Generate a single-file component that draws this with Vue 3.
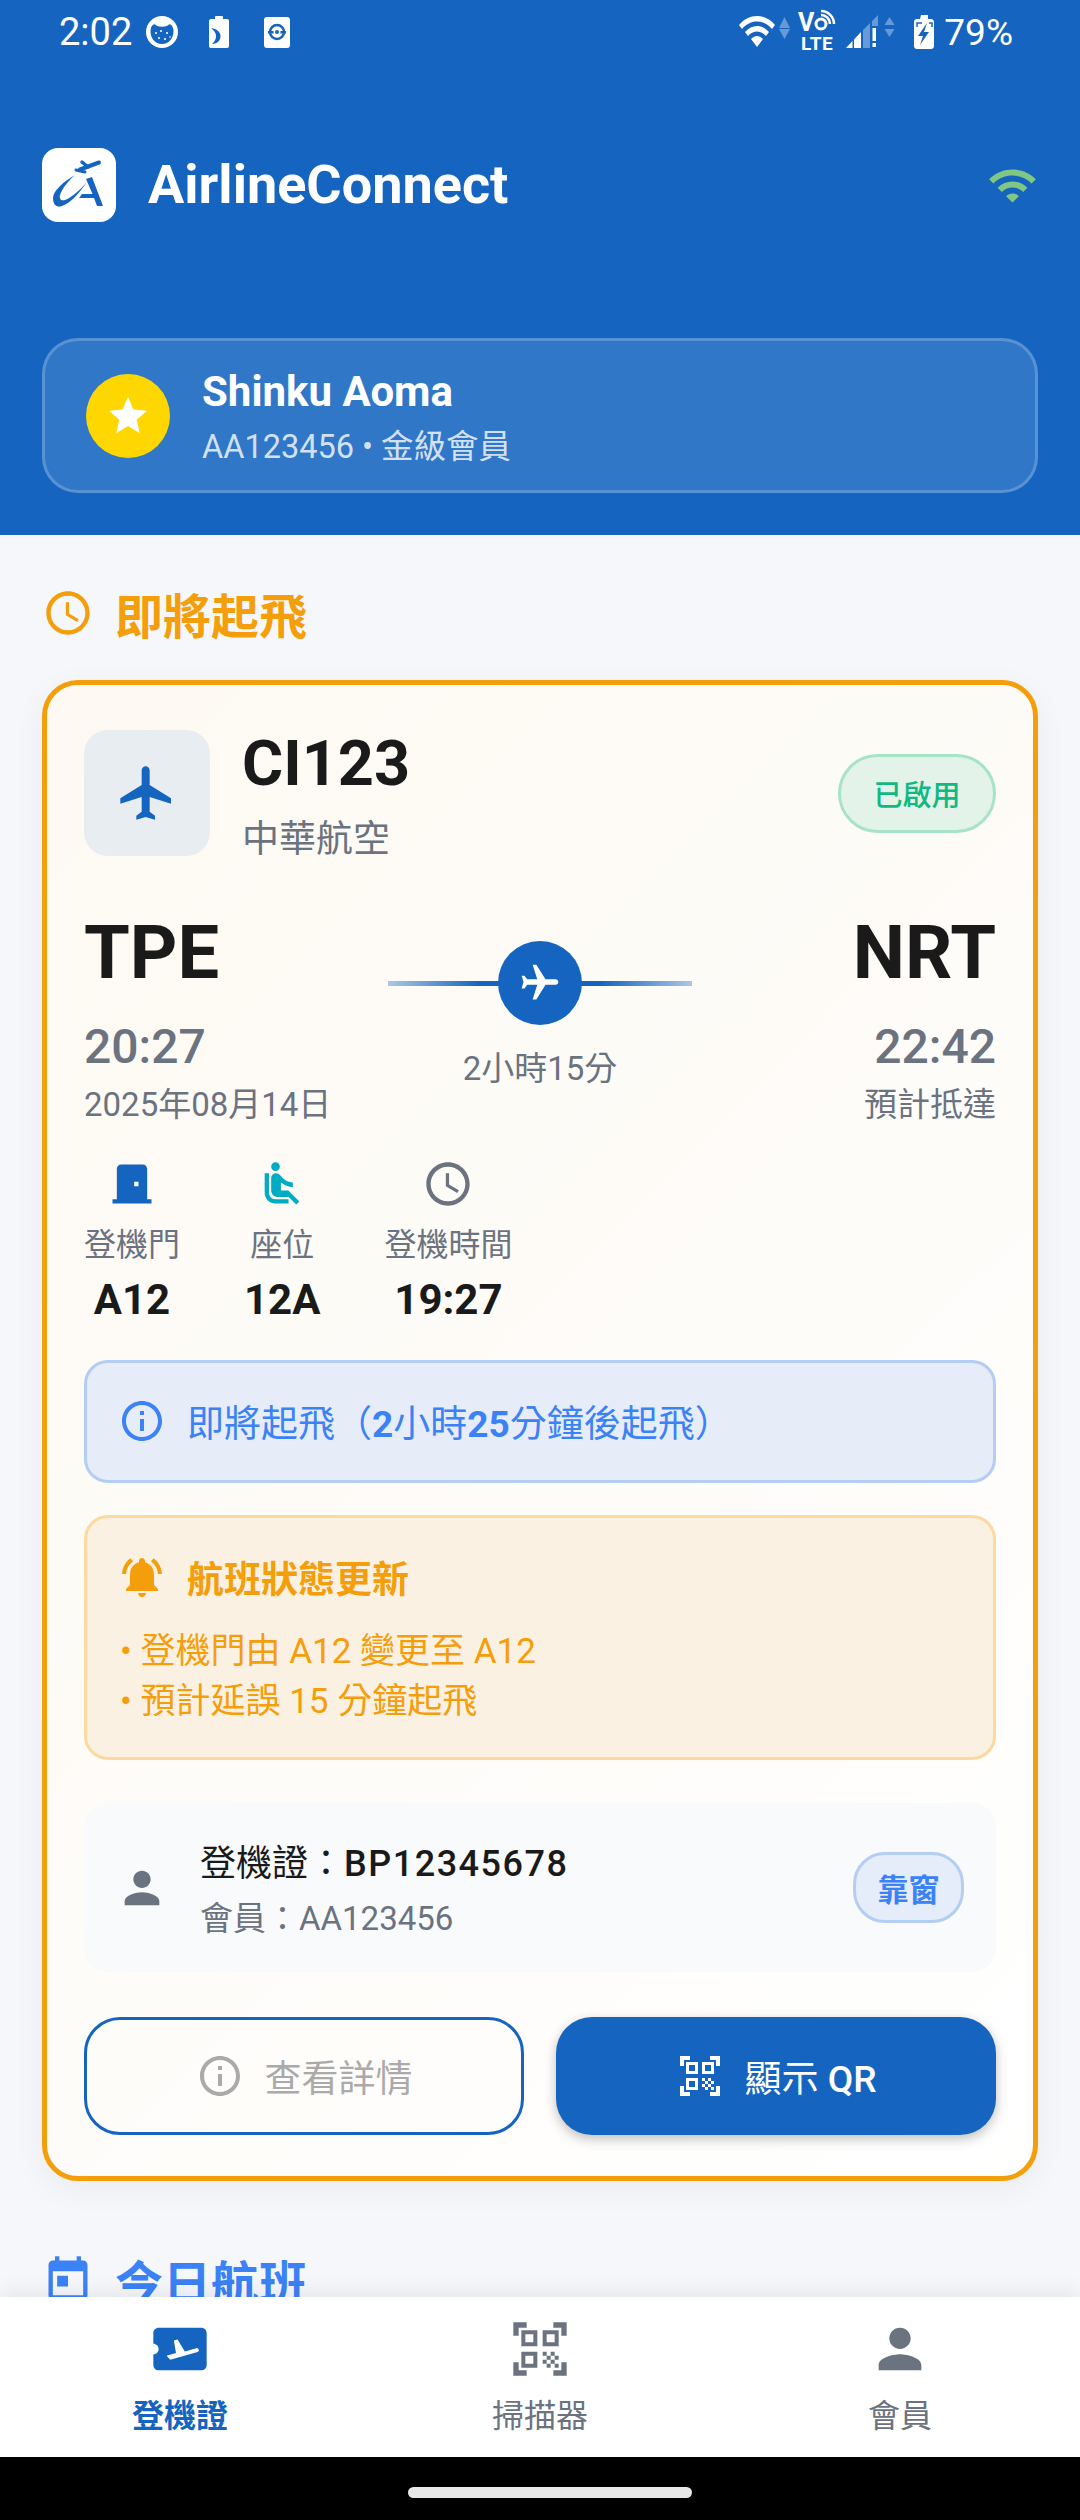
<template>
  <div class="screen">
    <header class="top">
      <div class="status-bar">
        <div class="status-side">
          <span class="clock">2:02</span>
          <svg class="status-left-icons" width="144" height="64" viewBox="0 0 144 64">
            <circle cx="16" cy="32" r="16" fill="#fff" />
            <path d="M4.5 30C5 26 7.5 23.5 9 24.5c3 3 11 3 14 0 1.500-1 4 1.500 4.500 5.500 0.500 8-4.500 14-11.500 14S4 38 4.500 30z" fill="#1565c0" />
            <g fill="#fff">
              <circle cx="10" cy="33" r="1" /><circle cx="15" cy="31" r="1" /><circle cx="21" cy="33" r="1" />
              <circle cx="13" cy="38" r="1" /><circle cx="19" cy="39" r="1" /><circle cx="24" cy="37" r="0.8" />
            </g>
            <rect x="69" y="16" width="8" height="4" rx="1" fill="#fff" />
            <rect x="63" y="19" width="20" height="29" rx="2" fill="#fff" />
            <path d="M65 28c7 1 10 5 9.500 9-.5 4-3.500 7-8.500 7 3-3 4-5 4-8s-2-6-5-8z" fill="#1565c0" />
            <rect x="118" y="17" width="26" height="31" rx="3" fill="#fff" />
            <circle cx="131" cy="32" r="7" fill="none" stroke="#1565c0" stroke-width="2.500" />
            <rect x="122" y="31" width="18" height="2.500" fill="#1565c0" />
            <circle cx="131" cy="32" r="3.500" fill="#fff" />
            <circle cx="131" cy="32" r="2" fill="#1565c0" />
          </svg>
        </div>
        <div class="status-side">
          <svg width="196" height="64" viewBox="0 0 196 64">
            <path d="M0 25C10 13 26 13 36 25l-3 4C25 19 11 19 3 29zM6 32c7-8 17-8 24 0l-3 4c-5-6-13-6-18 0zM12 39c4-4 8-4 12 0l-6 8z" fill="#fff" />
            <path d="M45.500 17L51 28H40zM40 29h11l-5.500 10z" fill="#fff" opacity=".35" />
            <text x="59" y="31" class="volte-v">V</text>
            <circle cx="82" cy="24" r="5" fill="none" stroke="#fff" stroke-width="3" />
            <path d="M82 15a9 9 0 0 1 9 9M82 11a13 13 0 0 1 13 13" fill="none" stroke="#fff" stroke-width="2.500" />
            <text x="62" y="50" class="volte-lte">LTE</text>
            <path d="M107 48l6.500-7v7zM115 39.500l7-7.500v16h-7z" fill="#fff" />
            <path d="M124 30l7-7v25h-7zM133 21l6-6v11h-6z" fill="#fff" opacity=".35" />
            <path d="M133.500 28h3.500v13h-3.500zM133.500 43h3.500v4h-3.500z" fill="#fff" />
            <path d="M150.500 17l5 8h-10zM145.500 29h10l-5 8z" fill="#fff" opacity=".35" />
            <path d="M182 15h7v4h3c1.700 0 3 1.300 3 3v24c0 1.700-1.300 3-3 3h-14c-1.700 0-3-1.300-3-3V22c0-1.700 1.300-3 3-3h3z" fill="#fff" />
            <path d="M188 23l-9 13h5l-3 9 9-13h-5z" fill="#1565c0" />
            <path d="M178 27v-4h5M193 27v-4h-3" fill="none" stroke="#1565c0" stroke-width="1.500" />
          </svg>
          <span class="battery">79%</span>
        </div>
      </div>

      <div class="app-bar">
        <div class="brand">
          <svg class="logo" width="74" height="74" viewBox="0 0 74 74">
            <rect width="74" height="74" rx="16" fill="#fff" />
            <g fill="none" stroke="#1565c0" stroke-linecap="round">
              <path d="M57 14.500L38 21.500" stroke-width="4" />
              <path d="M40 14l6 5" stroke-width="3.500" />
              <path d="M34 22l9 2" stroke-width="3" />
            </g>
            <g fill="#1565c0">
              <path d="M33 27C22 33 11 43 11 50c0 7 4 10 9 8 9-3 18-14 25-24-7 8-16 16-22 18-4 1-6-1-5-5 2-6 8-14 15-20z" />
              <path d="M44 31l6-2 11 29h-6l-3-8H37l3-4h10.500z" />
            </g>
          </svg>
          <span class="brand-name">AirlineConnect</span>
        </div>
        <svg width="51" height="51" viewBox="0 0 24 24"><path fill="#81c784" :d="wifiPath" /></svg>
      </div>

      <div class="member">
        <div class="avatar">
          <svg width="46" height="46" viewBox="0 0 24 24"><path fill="#fff" d="M12 17.270L18.180 21l-1.640-7.030L22 9.240l-7.190-.61L12 2 9.190 8.630 2 9.240l5.460 4.730L5.820 21z" /></svg>
        </div>
        <div class="member-text">
          <div class="member-name">Shinku Aoma</div>
          <div class="member-sub">AA123456 • 金級會員</div>
        </div>
      </div>
    </header>

    <main class="content">
      <div class="section-title amber">
        <svg width="52" height="52" viewBox="0 0 24 24"><path fill="currentColor" :d="clockPath" /></svg>
        <span>即將起飛</span>
      </div>

      <section class="card">
        <div class="flight-head">
          <div class="flight-box">
            <svg width="64" height="64" viewBox="0 0 24 24"><path fill="#1565c0" :d="planePath" /></svg>
          </div>
          <div class="flight-name">
            <div class="flight-no">CI123</div>
            <div class="airline">中華航空</div>
          </div>
          <div class="status-pill">已啟用</div>
        </div>

        <div class="route">
          <div>
            <div class="code">TPE</div>
            <div class="time">20:27</div>
            <div class="note">2025年08月14日</div>
          </div>
          <div class="route-mid">
            <div class="route-line">
              <div class="route-dot">
                <svg class="route-plane" width="44" height="44" viewBox="0 0 24 24"><path fill="#fff" :d="planePath" /></svg>
              </div>
            </div>
            <div class="duration">2小時15分</div>
          </div>
          <div class="route-end">
            <div class="code">NRT</div>
            <div class="time">22:42</div>
            <div class="note">預計抵達</div>
          </div>
        </div>

        <div class="details">
          <div v-for="d in details" :key="d.label" class="detail">
            <svg width="52" height="52" viewBox="0 0 24 24"><path :fill="d.color" :d="d.icon" /></svg>
            <div class="detail-label">{{ d.label }}</div>
            <div class="detail-value">{{ d.value }}</div>
          </div>
        </div>

        <div class="info-banner">
          <svg width="48" height="48" viewBox="0 0 24 24"><path fill="#3b82f6" :d="infoPath" /></svg>
          <span>即將起飛（<b>2</b>小時<b>25</b>分鐘後起飛）</span>
        </div>

        <div class="alert">
          <div class="alert-title">
            <svg width="48" height="48" viewBox="0 0 24 24"><path fill="#f59e0b" d="M7.580 4.080L6.150 2.650C3.750 4.480 2.170 7.300 2.030 10.500h2c.15-2.650 1.510-4.970 3.550-6.420zm12.390 6.420h2c-.15-3.200-1.730-6.020-4.120-7.850l-1.420 1.430c2.020 1.450 3.390 3.770 3.540 6.420zM18 11c0-3.070-1.640-5.640-4.500-6.320V4c0-.83-.67-1.500-1.500-1.500s-1.500.67-1.500 1.500v.68C7.630 5.360 6 7.920 6 11v5l-2 2v1h16v-1l-2-2v-5zm-6 11c.14 0 .27-.01.4-.04.65-.14 1.180-.58 1.440-1.180.1-.24.15-.5.15-.78h-4c.01 1.100.9 2 2.010 2z" /></svg>
            <span>航班狀態更新</span>
          </div>
          <div class="alert-lines">
            <div>• 登機門由 A12 變更至 A12</div>
            <div>• 預計延誤 15 分鐘起飛</div>
          </div>
        </div>

        <div class="passenger">
          <svg width="52" height="52" viewBox="0 0 24 24"><path fill="#6b7280" :d="personPath" /></svg>
          <div class="passenger-text">
            <div class="pass-no">登機證：<b>BP12345678</b></div>
            <div class="pass-member">會員：AA123456</div>
          </div>
          <div class="seat-pill">靠窗</div>
        </div>

        <div class="actions">
          <button class="btn btn-outline">
            <svg width="48" height="48" viewBox="0 0 24 24"><path fill="currentColor" :d="infoPath" /></svg>
            <span>查看詳情</span>
          </button>
          <button class="btn btn-solid">
            <svg width="48" height="48" viewBox="0 0 24 24"><path fill="currentColor" :d="qrPath" /></svg>
            <span>顯示 <b>QR</b></span>
          </button>
        </div>
      </section>

      <div class="section-title blue next">
        <svg width="52" height="52" viewBox="0 0 24 24"><path fill="currentColor" d="M19 3h-1V1h-2v2H8V1H6v2H5c-1.110 0-1.990.9-1.990 2L3 19c0 1.100.89 2 2 2h14c1.100 0 2-.9 2-2V5c0-1.100-.9-2-2-2zm0 16H5V8h14v11zM7 10h5v5H7z" /></svg>
        <span>今日航班</span>
      </div>
    </main>

    <nav class="tabs">
      <div class="tab active">
        <svg width="64" height="64" viewBox="0 0 24 24">
          <path fill="#1565c0" d="M4 4h16c1.100 0 2 .9 2 2v12c0 1.100-.9 2-2 2H4c-1.100 0-2-.9-2-2v-4c1.100 0 2-.9 2-2s-.9-2-2-2V6c0-1.100.9-2 2-2z" />
          <path fill="#fff" d="M9.700 8.800l1.400-.4 2.700 4.500 4.400-1.200c.8-.2 1.300 1 .4 1.400L8.300 16 7 14.500l3.500-1z" />
        </svg>
        <span>登機證</span>
      </div>
      <div class="tab">
        <svg width="64" height="64" viewBox="0 0 24 24"><path fill="#6b7280" :d="qrPath" /></svg>
        <span>掃描器</span>
      </div>
      <div class="tab">
        <svg width="64" height="64" viewBox="0 0 24 24"><path fill="#6b7280" :d="personPath" /></svg>
        <span>會員</span>
      </div>
    </nav>

    <div class="gesture-bar"><div class="gesture-handle"></div></div>
  </div>
</template>

<script setup>
const wifiPath = 'M1 9l2 2c4.970-4.970 13.030-4.970 18 0l2-2C16.930 2.930 7.080 2.930 1 9zm8 8l3 3 3-3c-1.650-1.660-4.340-1.660-6 0zm-4-4l2 2c2.760-2.760 7.240-2.760 10 0l2-2C15.140 9.140 8.870 9.140 5 13z'
const clockPath = 'M11.990 2C6.470 2 2 6.480 2 12s4.470 10 9.990 10C17.520 22 22 17.520 22 12S17.520 2 11.990 2zM12 20c-4.420 0-8-3.580-8-8s3.580-8 8-8 8 3.580 8 8-3.580 8-8 8zm.5-13H11v6l5.250 3.150.75-1.230-4.500-2.670z'
const planePath = 'M21 16v-2l-8-5V3.500c0-.83-.67-1.500-1.500-1.500S10 2.670 10 3.500V9l-8 5v2l8-2.500V19l-2 1.500V22l3.500-1 3.500 1v-1.500L13 19v-5.500l8 2.500z'
const infoPath = 'M11 7h2v2h-2zm0 4h2v6h-2zm1-9C6.480 2 2 6.480 2 12s4.480 10 10 10 10-4.480 10-10S17.520 2 12 2zm0 18c-4.410 0-8-3.590-8-8s3.590-8 8-8 8 3.590 8 8-3.590 8-8 8z'
const personPath = 'M12 12c2.210 0 4-1.790 4-4s-1.790-4-4-4-4 1.790-4 4 1.790 4 4 4zm0 2c-2.670 0-8 1.340-8 4v2h16v-2c0-2.660-5.330-4-8-4z'
const qrPath = 'M9.500 6.500v3h-3v-3h3M11 5H5v6h6V5zm-1.500 9.500v3h-3v-3h3M11 13H5v6h6v-6zm6.500-6.500v3h-3v-3h3M19 5h-6v6h6V5zm-6 8h1.500v1.500H13V13zm1.500 1.500H16V16h-1.500v-1.500zM16 13h1.500v1.500H16V13zm-3 3h1.500v1.500H13V16zm1.500 1.500H16V19h-1.500v-1.500zM16 16h1.500v1.500H16V16zm1.500-1.500H19V16h-1.500v-1.500zm0 3H19V19h-1.500v-1.500zM22 7h-2V4h-3V2h5v5zm0 15v-5h-2v3h-3v2h5zM2 22h5v-2H4v-3H2v5zM2 2v5h2V4h3V2H2z'

const details = [
  {
    label: '登機門',
    value: 'A12',
    color: '#1565c0',
    icon: 'M19 19V5c0-1.100-.9-2-2-2H7c-1.100 0-2 .9-2 2v14H3v2h18v-2h-2zm-4-6h-2v-2h2v2z'
  },
  {
    label: '座位',
    value: '12A',
    color: '#00acc1',
    icon: 'M7.590 5.410c-.78-.78-.78-2.050 0-2.830.78-.78 2.050-.78 2.830 0 .78.78.78 2.050 0 2.830-.79.79-2.050.79-2.830 0zM6 16V7H4v9c0 2.760 2.240 5 5 5h6v-2H9c-1.660 0-3-1.340-3-3zm14 4.070L14.930 15H11.500v-3.680c1.400 1.150 3.600 2.160 5.500 2.160v-2.160c-1.660.02-3.610-.87-4.670-2.040l-1.400-1.550c-.19-.21-.43-.38-.69-.5-.29-.14-.62-.23-.96-.23h-.03C8.010 7 7 8.010 7 9.250V15c0 1.660 1.340 3 3 3h5.070l3.500 3.500L20 20.070z'
  },
  { label: '登機時間', value: '19:27', color: '#6b7280', icon: clockPath }
]
</script>

<style>
html,
body {
  margin: 0;
  background: #fff;
}
</style>

<style scoped>
.screen {
  width: 1080px;
  height: 2520px;
  display: flex;
  flex-direction: column;
  overflow: hidden;
  font-family: Roboto, "Noto Sans CJK TC", sans-serif;
  color: #1a1a1a;
  background: #f5f7fb;
}

/* header */
.top {
  flex: none;
  height: 535px;
  box-sizing: border-box;
  background: #1565c0;
  color: #fff;
}

.status-bar {
  height: 64px;
  padding: 0 67px 0 59px;
  display: flex;
  justify-content: space-between;
  align-items: center;
  font-size: 38px;
}

.status-side {
  display: flex;
  align-items: center;
}

.status-left-icons {
  margin-left: 14px;
}

.battery {
  margin-left: 9px;
  font-size: 37px;
}

.volte-v {
  font-size: 25px;
  font-weight: 700;
  fill: #fff;
}

.volte-lte {
  font-size: 19px;
  font-weight: 700;
  fill: #fff;
  letter-spacing: 0.5px;
}

.app-bar {
  margin-top: 84px;
  padding: 0 42px;
  height: 74px;
  display: flex;
  justify-content: space-between;
  align-items: center;
}

.brand {
  display: flex;
  align-items: center;
  gap: 32px;
}

.brand-name {
  font-size: 54px;
  font-weight: 700;
  line-height: 72px;
}

.member {
  margin: 116px 42px 0;
  height: 155px;
  box-sizing: border-box;
  padding: 0 41px;
  display: flex;
  align-items: center;
  gap: 32px;
  border: 3px solid rgba(255, 255, 255, 0.2);
  border-radius: 36px;
  background: rgba(255, 255, 255, 0.12);
}

.avatar {
  width: 84px;
  height: 84px;
  border-radius: 50%;
  background: #ffd700;
  display: flex;
  align-items: center;
  justify-content: center;
}

.member-text {
  margin-top: 3px;
}

.member-name {
  font-size: 42px;
  font-weight: 700;
  line-height: 52px;
}

.member-sub {
  margin-top: 7px;
  font-size: 32.5px;
  line-height: 44px;
  color: rgba(255, 255, 255, 0.8);
}

/* content */
.content {
  flex: 1;
  min-height: 0;
  overflow: hidden;
  padding: 48px 42px 0;
}

.section-title {
  height: 60px;
  display: flex;
  align-items: center;
  gap: 21px;
  font-size: 48px;
  font-weight: 700;
}

.section-title.amber {
  color: #f59e0b;
}

.section-title.blue {
  color: #3b82f6;
}

.section-title.next {
  margin-top: 69px;
}

.card {
  margin-top: 37px;
  height: 1501px;
  box-sizing: border-box;
  padding: 45px 37px 0;
  border: 5px solid #f59e0b;
  border-radius: 36px;
  background: linear-gradient(135deg, #fdf9f2, #ffffff);
  box-shadow: 0 8px 32px rgba(0, 0, 0, 0.05);
}

.flight-head {
  height: 126px;
  display: flex;
  align-items: center;
}

.flight-box {
  width: 126px;
  height: 126px;
  border-radius: 24px;
  background: #e8edf1;
  display: flex;
  align-items: center;
  justify-content: center;
}

.flight-name {
  flex: 1;
  align-self: flex-start;
  margin-left: 32px;
  padding-top: 2px;
}

.flight-no {
  font-size: 63px;
  font-weight: 700;
  line-height: 64px;
}

.airline {
  margin-top: 22px;
  font-size: 37px;
  line-height: 44px;
  color: #6b7280;
}

.status-pill {
  width: 158px;
  height: 79px;
  box-sizing: border-box;
  border: 3px solid #a7e3c7;
  border-radius: 40px;
  background: #e3f3e9;
  color: #10b981;
  font-size: 29px;
  font-weight: 500;
  display: flex;
  align-items: center;
  justify-content: center;
}

.route {
  margin-top: 55px;
  display: grid;
  grid-template-columns: 1fr 304px 1fr;
}

.code {
  font-size: 74px;
  font-weight: 700;
  line-height: 84px;
}

.time {
  margin-top: 24px;
  font-size: 48px;
  font-weight: 500;
  line-height: 56px;
  color: #6b7280;
}

.note {
  margin-top: 8px;
  font-size: 33px;
  line-height: 44px;
  color: #6b7280;
  white-space: nowrap;
}

.route-end {
  text-align: right;
}

.route-mid {
  padding-top: 30px;
  text-align: center;
}

.route-line {
  height: 84px;
  display: flex;
  align-items: center;
  justify-content: center;
  background: linear-gradient(
      90deg,
      rgba(21, 101, 192, 0.35),
      #1565c0 30%,
      #1565c0 70%,
      rgba(21, 101, 192, 0.35)
    )
    center / 100% 5px no-repeat;
}

.route-dot {
  width: 84px;
  height: 84px;
  border-radius: 50%;
  background: #1565c0;
  display: flex;
  align-items: center;
  justify-content: center;
}

.route-plane {
  transform: rotate(90deg);
}

.duration {
  margin-top: 22px;
  font-size: 33px;
  line-height: 44px;
  color: #6b7280;
}

.details {
  margin-top: 31px;
  display: flex;
  gap: 64px;
}

.detail {
  display: flex;
  flex-direction: column;
  align-items: center;
}

.detail-label {
  margin-top: 13px;
  font-size: 32px;
  line-height: 44px;
  color: #6b7280;
}

.detail-value {
  margin-top: 9px;
  font-size: 42px;
  font-weight: 700;
  line-height: 48px;
}

.info-banner {
  margin-top: 36px;
  height: 123px;
  box-sizing: border-box;
  padding-left: 31px;
  padding-bottom: 2px;
  display: flex;
  align-items: center;
  gap: 21px;
  border: 3px solid #b3cdf5;
  border-radius: 24px;
  background: #e6edf9;
  color: #3b82f6;
  font-size: 37px;
}

.info-banner b {
  font-weight: 700;
}

.alert {
  margin-top: 32px;
  height: 245px;
  box-sizing: border-box;
  padding: 34px 31px 0;
  border: 3px solid #fbd9a0;
  border-radius: 24px;
  background: #fbf1e3;
  color: #f59e0b;
}

.alert-title {
  height: 50px;
  display: flex;
  align-items: center;
  gap: 21px;
  font-size: 37px;
  font-weight: 700;
}

.alert-lines {
  margin-top: 25px;
  padding-left: 2px;
  font-size: 35px;
  line-height: 50px;
}

.passenger {
  margin-top: 43px;
  height: 169px;
  box-sizing: border-box;
  padding: 0 32px;
  display: flex;
  align-items: center;
  gap: 32px;
  border-radius: 24px;
  background: #f8fafc;
}

.passenger-text {
  flex: 1;
  padding-top: 4px;
}

.pass-no {
  font-size: 36px;
  line-height: 50px;
}

.pass-no b {
  font-weight: 500;
  letter-spacing: 1.5px;
}

.pass-member {
  margin-top: 8px;
  font-size: 33px;
  line-height: 44px;
  color: #6b7280;
}

.seat-pill {
  width: 111px;
  height: 71px;
  box-sizing: border-box;
  border: 3px solid #b3cdf5;
  border-radius: 32px;
  background: #e5edfa;
  color: #3b82f6;
  font-size: 31px;
  font-weight: 700;
  display: flex;
  align-items: center;
  justify-content: center;
}

.actions {
  margin-top: 45px;
  display: grid;
  grid-template-columns: 1fr 1fr;
  gap: 32px;
}

.btn {
  height: 118px;
  box-sizing: border-box;
  display: flex;
  align-items: center;
  justify-content: center;
  gap: 21px;
  border-radius: 36px;
  font-family: inherit;
  font-size: 37px;
}

.btn-outline {
  border: 3px solid #1565c0;
  background: transparent;
  color: #aaaaaa;
}

.btn-solid {
  border: none;
  background: #1565c0;
  color: #fff;
  box-shadow: 0 4px 12px rgba(0, 0, 0, 0.25);
}

.btn-solid b {
  font-weight: 500;
}

/* bottom nav */
.tabs {
  position: relative;
  flex: none;
  height: 160px;
  box-sizing: border-box;
  padding-top: 20px;
  display: grid;
  grid-template-columns: repeat(3, 1fr);
  background: #fff;
  box-shadow: 0 -4px 20px rgba(0, 0, 0, 0.08);
}

.tab {
  display: flex;
  flex-direction: column;
  align-items: center;
  gap: 13px;
  font-size: 32px;
  line-height: 44px;
  color: #6b7280;
}

.tab.active {
  color: #1565c0;
  font-weight: 700;
}

.gesture-bar {
  flex: none;
  height: 63px;
  background: #000;
  display: flex;
  justify-content: center;
  padding-top: 30px;
  box-sizing: border-box;
}

.gesture-handle {
  width: 284px;
  height: 11px;
  margin-left: 20px;
  border-radius: 6px;
  background: #e8e8e8;
}
</style>
